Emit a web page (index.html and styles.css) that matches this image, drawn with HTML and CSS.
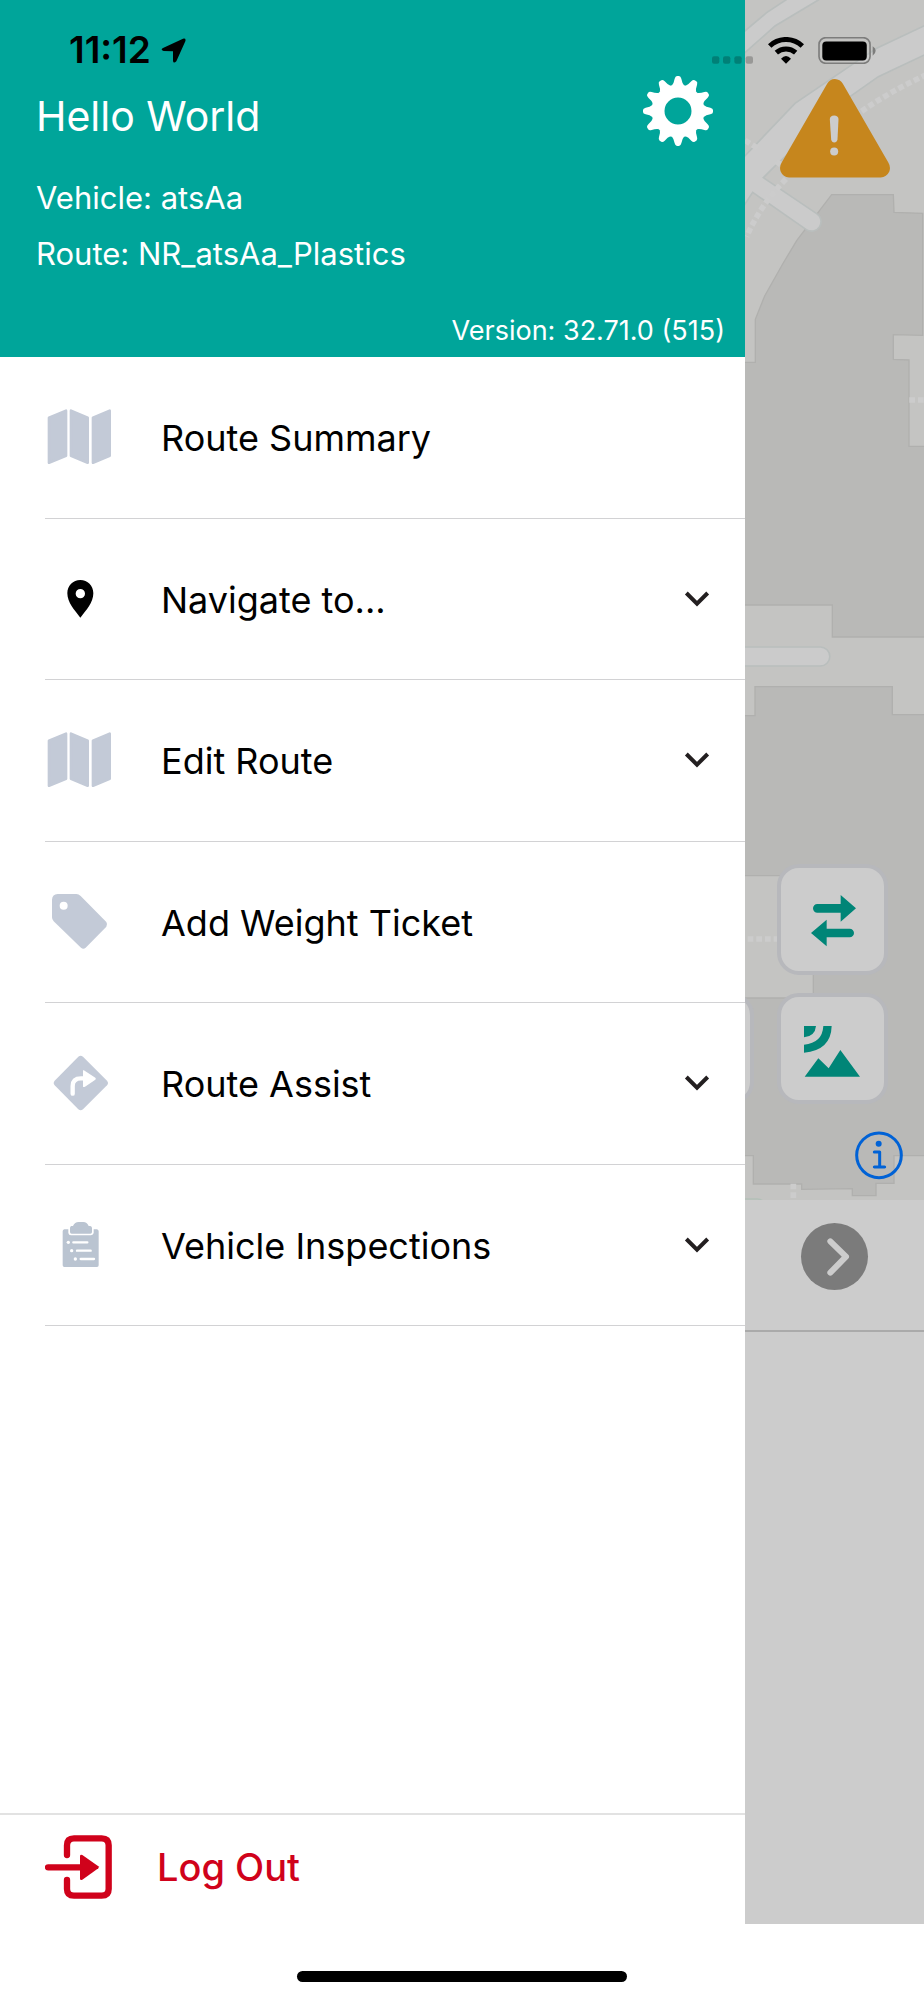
FILE: index.html
```html
<!DOCTYPE html>
<html lang="en">
<head>
<meta charset="utf-8">
<meta name="viewport" content="width=device-width, initial-scale=1">
<title>Route menu</title>
<link rel="stylesheet" href="styles.css">
</head>
<body>
<div class="screen">
  <div class="status">
    <div class="status-left">
      <span class="time">11:12</span>
      <svg class="location" viewBox="482 112 75 75" aria-hidden="true"><path d="M488 142 L548 114 Q558 112 555 122 L528 182 Q519 190 518 180 L518 152 L490 151 Q479 148 488 142Z"/></svg>
    </div>
    <div class="status-right">
      <svg class="signal" viewBox="0 0 123 22" aria-hidden="true"><rect width="22" height="22" rx="6"/><rect x="33" width="22" height="22" rx="6"/><rect x="67" width="22" height="22" rx="6"/><rect x="101" width="22" height="22" rx="6"/></svg>
      <svg class="wifi" viewBox="112 110 108 81" aria-hidden="true"><path class="wifi-arc" d="M117 137 A71 71 0 0 1 215 137 M137 157 A44 44 0 0 1 195 157"/><path d="M166 190 L151 175 Q166 159 181 175Z"/></svg>
      <svg class="battery" viewBox="264 109 174 82" aria-hidden="true"><rect class="battery-case" x="266" y="111" width="155" height="78" rx="21"/><rect x="276" y="123" width="135" height="57" rx="12"/><path class="battery-tip" d="M429 137 Q438 142 438 151 T429 166Z"/></svg>
    </div>
  </div>

  <div class="panes">
    <nav class="drawer" aria-label="Main menu">
      <header class="header">
        <div class="title-row">
          <h1 class="title">Hello World</h1>
          <button class="icon-button gear" aria-label="Settings">
            <svg viewBox="-105 -105 210 210" aria-hidden="true">
              <defs><path id="tooth" d="M-19 -76 Q-12 -84 -10 -97 Q-8 -105 -3 -105 H3 Q8 -105 10 -97 Q12 -84 19 -76Z"/></defs>
              <circle class="gear-ring" r="60"/>
              <use href="#tooth"/><use href="#tooth" transform="rotate(30)"/><use href="#tooth" transform="rotate(60)"/><use href="#tooth" transform="rotate(90)"/><use href="#tooth" transform="rotate(120)"/><use href="#tooth" transform="rotate(150)"/><use href="#tooth" transform="rotate(180)"/><use href="#tooth" transform="rotate(210)"/><use href="#tooth" transform="rotate(240)"/><use href="#tooth" transform="rotate(270)"/><use href="#tooth" transform="rotate(300)"/><use href="#tooth" transform="rotate(330)"/>
            </svg>
          </button>
        </div>
        <div class="details">
          <p>Vehicle: atsAa</p>
          <p>Route: NR_atsAa_Plastics</p>
        </div>
        <p class="version">Version: 32.71.0 (515)</p>
      </header>

      <ul class="menu">
        <li><button class="item">
          <svg class="item-icon" viewBox="135 128 210 210" aria-hidden="true"><g class="rounded"><path d="M147 175 L198 154 V289 L147 310Z"/><path d="M213 154 L263 175 V310 L213 289Z"/><path d="M279 175 L329 154 V289 L279 310Z"/></g></svg>
          <span class="label">Route Summary</span>
        </button></li>
        <li><button class="item">
          <svg class="item-icon pin" viewBox="135 612 210 210" aria-hidden="true"><path fill-rule="evenodd" d="M241 660 C219 660 202 677 202 700 C202 727 223 750 241 773 C259 750 280 727 280 700 C280 677 263 660 241 660Z M241 687 a14 14 0 1 1 0 28 a14 14 0 1 1 0 -28Z"/></svg>
          <span class="label">Navigate to...</span>
          <svg class="chevron" viewBox="124 69 96 96" aria-hidden="true"><path d="M140 99 L172 131 L204 99"/></svg>
        </button></li>
        <li><button class="item">
          <svg class="item-icon" viewBox="135 128 210 210" aria-hidden="true"><g class="rounded"><path d="M147 175 L198 154 V289 L147 310Z"/><path d="M213 154 L263 175 V310 L213 289Z"/><path d="M279 175 L329 154 V289 L279 310Z"/></g></svg>
          <span class="label">Edit Route</span>
          <svg class="chevron" viewBox="124 69 96 96" aria-hidden="true"><path d="M140 99 L172 131 L204 99"/></svg>
        </button></li>
        <li><button class="item">
          <svg class="item-icon" viewBox="135 201 210 210" aria-hidden="true"><path fill-rule="evenodd" d="M173 222 H229 Q236 222 242 228 L319 306 Q324 314 319 320 L257 383 Q250 389 243 383 L161 304 Q156 299 156 292 V239 Q157 223 173 222Z M191 245 a12 12 0 1 0 0 24 a12 12 0 1 0 0 -24Z"/></svg>
          <span class="label">Add Weight Ticket</span>
        </button></li>
        <li><button class="item">
          <svg class="item-icon" viewBox="135 685 210 210" aria-hidden="true"><path d="M235 711 Q242 705 249 711 L321 783 Q327 790 321 797 L249 869 Q242 875 235 869 L164 797 Q158 790 164 783Z"/><path class="turn-line" d="M218 822 V799 Q218 776 243 776 H252"/><path class="cutout" d="M249 752 Q252 751 255 754 L286 774 Q289 777 286 780 L255 801 Q251 803 249 801Z"/></svg>
          <span class="label">Route Assist</span>
          <svg class="chevron" viewBox="124 69 96 96" aria-hidden="true"><path d="M140 99 L172 131 L204 99"/></svg>
        </button></li>
        <li><button class="item">
          <svg class="item-icon clipboard" viewBox="135 1170 210 210" aria-hidden="true"><path d="M193 1228 H205 V1239 Q206 1246 213 1246 H273 Q280 1245 281 1239 V1228 H291 Q296 1229 296 1234 V1336 Q296 1341 291 1341 H193 Q188 1341 188 1336 V1234 Q188 1229 193 1228Z"/><path d="M214 1218 H219 Q224 1206 236 1206 H250 Q261 1206 266 1218 H271 Q276 1219 276 1224 V1236 Q276 1241 271 1241 H215 Q210 1241 210 1236 V1224 Q210 1219 214 1218Z"/><path class="form-lines" d="M220 1267 H262 M231 1292 H272 M242 1317 H282"/><g class="cutout"><circle cx="205" cy="1267" r="5"/><circle cx="215" cy="1292" r="5"/><circle cx="226" cy="1317" r="5"/></g></svg>
          <span class="label">Vehicle Inspections</span>
          <svg class="chevron" viewBox="124 69 96 96" aria-hidden="true"><path d="M140 99 L172 131 L204 99"/></svg>
        </button></li>
      </ul>

      <button class="logout">
        <svg class="item-icon" viewBox="135 156 210 210" aria-hidden="true"><path class="door" d="M201 225 V196 Q201 175 222 175 H305 Q326 175 326 196 V327 Q326 347 305 347 H222 Q201 347 201 327 V300 M144 262 H245"/><path d="M240 228 Q241 222 247 225 L295 259 Q298 262 295 265 L247 299 Q241 302 240 297Z"/></svg>
        <span>Log Out</span>
      </button>
    </nav>

    <main class="content">
      <section class="map" aria-label="Map">
        <!-- Map drawing, three units per pixel -->
        <svg class="map-art" viewBox="45 0 537 3600" preserveAspectRatio="xMinYMin slice" aria-hidden="true">
          <g class="building">
            <path d="M0 1087 H76 V958 L104 888 L158 792 L200 722 L305 584 H490 L492 637 L578 640 V1006 L490 1004 V1078 L537 1080 V1339 L900 1341 V1911 H307 V1815 H0Z"/>
            <path d="M0 2147 H75 V2060 H487 V2144 H900 V3467 H492 V3550 H438 V3587 H367 V3566 L215 3568 V3552 H70 V3467 H0 V2994 H250 V2627 H0Z"/>
          </g>
          <g class="road">
            <path d="M20 114 L110 38 L190 -15 H285 L265 0 L135 78 L20 180Z"/>
            <path d="M640 50 L440 145 L375 188 L195 310 L20 494 V650 L45 612 L68 577 L229 689 A27 27 0 0 0 260 641 L100 533 L134 499 L360 290 L445 230 L640 138Z"/>
            <path d="M0 1941 H271 A28 28 0 0 1 271 1998 H0Z"/>
          </g>
          <path class="path-dots" d="M45 421 L82 444 M150 482 L136 502 M168 537 Q90 616 50 710 M395 334 Q480 274 590 224 M538 1200 H600 M53 2817 H160 M190 3551 V3600"/>
          <path class="water" d="M45 3597 H82 Q92 3597 98 3603"/>
        </svg>
        <button class="icon-button warning" aria-label="Warning">
          <svg viewBox="146 236 329 296" aria-hidden="true"><path class="warning-fill" d="M287 250 Q295 236 310 236 Q326 237 334 250 L470 486 Q478 499 473 513 Q465 530 447 531 H173 Q155 530 148 513 Q143 499 151 486Z"/><path class="warning-mark" d="M295 356 Q296 345 308 345 Q320 345 321 356 L318 417 Q316 426 308 426 Q301 426 299 417Z"/><circle class="warning-mark" cx="308" cy="453" r="12"/></svg>
        </button>
        <div class="tools">
          <button class="tool" aria-label="Swap">
            <svg viewBox="153 82 309 309" aria-hidden="true"><path d="M262 190 H332 V163 L378 203 L332 243 V216 H262 A13 13 0 0 1 262 190Z M359 264 H290 V237 L243 277 L290 317 V290 H359 A13 13 0 0 0 359 264Z"/></svg>
          </button>
          <button class="tool" aria-label="Satellite view">
            <svg viewBox="153 470 309 309" aria-hidden="true"><path d="M222 557 H258 Q255 588 222 591Z M280 557 H305 Q303 630 222 637 V613 Q277 608 280 557Z M224 709 L265 654 L296 684 L331 629 L390 709Z"/></svg>
          </button>
          <span class="tool tool-edge"></span>
        </div>
        <button class="icon-button info" aria-label="Information">
          <svg viewBox="375 35 144 146" aria-hidden="true"><circle class="info-line" cx="447" cy="108" r="67"/><circle class="info-dot" cx="446" cy="73" r="9"/><path class="info-line" d="M433 98 H449 V142 M433 143 H464"/></svg>
        </button>
      </section>
      <section class="stop">
        <button class="next" aria-label="Next stop">
          <svg viewBox="213 308 201 201" aria-hidden="true"><path d="M301 363 L348 409 L301 457"/></svg>
        </button>
      </section>
    </main>
  </div>
  <div class="home"><span class="home-bar"></span></div>
</div>
</body>
</html>
```
FILE: styles.css
```css
* { box-sizing: border-box; }

body {
  margin: 0;
  background: #fff;
  color: #000;
  font-family: Inter, "Liberation Sans", sans-serif;
}

h1, p, ul { margin: 0; padding: 0; font-weight: 400; }
ul { list-style: none; }
svg { display: block; }

button {
  margin: 0;
  padding: 0;
  border: 0;
  background: none;
  color: inherit;
  font: inherit;
  cursor: pointer;
}

.icon-button svg { width: 100%; height: auto; }

.screen {
  position: relative;
  display: flex;
  flex-direction: column;
  min-height: 100vh;
}

/* Status bar, laid over both panes */
.status {
  position: absolute;
  inset: 0 0 auto 0;
  z-index: 2;
  display: flex;
  justify-content: space-between;
  padding: 30px 48px 0 69px;
  pointer-events: none;
}
.status-left { display: flex; align-items: center; gap: 10px; }
.time { font-size: 37px; line-height: 40px; font-weight: 600; }
.location { width: 25px; height: 25px; }
.status-right { display: flex; align-items: flex-end; padding-bottom: 6px; }
.signal { width: 41px; height: 8px; margin-right: 15px; opacity: 0.22; }
.wifi { width: 36px; height: 27px; margin-right: 14px; }
.wifi-arc { fill: none; stroke: #000; stroke-width: 15; }
.battery { width: 58px; height: 27px; }
.battery-case { fill: none; stroke: #7d7d7c; stroke-width: 5; }
.battery-tip { fill: #7d7d7c; }

.panes {
  flex: 1;
  display: grid;
  grid-template-columns: minmax(0, 1fr) 179px;
}

/* Drawer */
.drawer { display: flex; flex-direction: column; background: #fff; }

.header {
  padding: 76px 20px 9px 36px;
  background: #00a59a;
  color: #fff;
}
.title-row {
  display: flex;
  justify-content: space-between;
  align-items: flex-end;
  padding-right: 12px;
}
.title { font-size: 41px; line-height: 60px; }
.gear { width: 70px; fill: #fff; }
.gear-ring { fill: none; stroke: #fff; stroke-width: 39; }
.details { padding: 24px 0 32px; font-size: 31px; line-height: 56px; }
.version { font-size: 27px; line-height: 34px; text-align: right; }

.menu {
  display: grid;
  grid-auto-rows: 1fr;
  min-height: 969px;
  padding-left: 45px;
}
.menu li { display: flex; border-bottom: 1px solid #d2d2d4; }
.item {
  flex: 1;
  display: flex;
  align-items: center;
  gap: 46px;
  padding-right: 32px;
  font-size: 36px;
  text-align: left;
}
.item-icon { flex: none; width: 70px; height: 70px; fill: #c3cad7; }
.rounded { stroke: #c3cad7; stroke-width: 8; stroke-linejoin: round; }
.pin { fill: #000; }
.clipboard { fill: #bac4d1; }
.cutout { fill: #fff; }
.turn-line { fill: none; stroke: #fff; stroke-width: 13; stroke-linecap: round; }
.form-lines { fill: none; stroke: #fff; stroke-width: 7; stroke-linecap: round; }
.label { flex: 1; padding-top: 2px; }
.chevron {
  width: 32px;
  height: 32px;
  fill: none;
  stroke: #231f20;
  stroke-width: 12;
}

.logout {
  display: flex;
  align-items: center;
  gap: 42px;
  margin-top: auto;
  padding: 17px 0 22px 45px;
  border-top: 2px solid #e2e2e2;
  color: #d0021b;
  font-size: 38px;
  font-weight: 500;
}
.logout .item-icon { fill: #d0021b; }
.door { fill: none; stroke: #d0021b; stroke-width: 19; stroke-linecap: round; }

/* Dimmed content behind the drawer */
.content { overflow: hidden; background: #ccc; }

.map {
  position: relative;
  display: flex;
  flex-direction: column;
  align-items: center;
  min-height: 1200px;
  padding: 79px 0 20px;
  background: #c4c4c2;
}
.map-art { position: absolute; inset: 0; width: 100%; height: 100%; }
.building { fill: #b9b9b7; stroke: #b0b0ae; stroke-width: 4; }
.road { fill: #cbcbcb; stroke: #b9bebd; stroke-width: 5; }
.path-dots { fill: none; stroke: #ccc; stroke-width: 17; stroke-dasharray: 17 9; }
.water { fill: none; stroke: #b3c0b8; stroke-width: 5; }

.warning { position: relative; width: 110px; }
.warning-fill { fill: #c6861d; }
.warning-mark { fill: #ccc; }

.tools {
  position: relative;
  display: flex;
  flex-direction: column;
  align-items: center;
  gap: 18px;
  width: 100%;
  margin-top: auto;
  padding-right: 4px;
}
.tool {
  width: 111px;
  height: 111px;
  border: 4px solid #b7b8bc;
  border-radius: 22px;
  background: #ccc;
}
.tool svg { width: 100%; height: 100%; fill: #008577; }
.tool-edge { position: absolute; bottom: 0; left: -102px; }

.info { position: relative; align-self: flex-end; width: 48px; margin: 27px 21px 0 0; }
.info-line {
  fill: none;
  stroke: #0062d6;
  stroke-width: 9;
  stroke-linecap: round;
  stroke-linejoin: round;
}
.info-dot { fill: #0062d6; }

.stop {
  display: flex;
  justify-content: center;
  padding: 23px 0 40px;
  border-bottom: 2px solid #aaa;
}
.next { width: 67px; height: 67px; border-radius: 50%; background: #7b7b7b; }
.next svg {
  fill: none;
  stroke: #ccc;
  stroke-width: 18;
  stroke-linecap: round;
  stroke-linejoin: round;
}

/* Home indicator */
.home { display: flex; justify-content: center; padding: 47px 0 18px; }
.home-bar { width: 330px; height: 11px; border-radius: 6px; background: #000; }
```
